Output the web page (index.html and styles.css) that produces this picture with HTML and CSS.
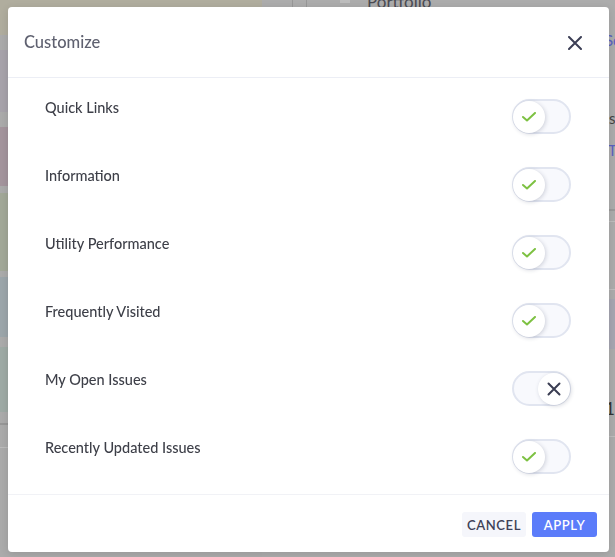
FILE: index.html
```html
<!DOCTYPE html>
<html lang="en">
<head>
    <meta charset="UTF-8">
    <meta name="viewport" content="width=device-width, initial-scale=1.0">
    <title>Customize</title>
    <link rel="stylesheet" href="styles.css">
</head>
<body>
    <!-- Page behind the overlay -->
    <div class="page">
        <aside class="sidebar">
            <div class="tile tile-olive"></div>
            <div class="tile tile-lilac"></div>
            <div class="tile tile-mauve"></div>
            <div class="tile tile-sage"></div>
            <div class="tile tile-steel"></div>
            <div class="tile tile-teal"></div>
            <div class="sidebar-rule"></div>
            <div class="sidebar-rule light"></div>
        </aside>
        <main class="content">
            <div class="topbar">
                <span class="topbar-tab"></span>
                <span class="topbar-box"></span>
                <span class="topbar-title">Portfolio</span>
            </div>
            <div class="panel">
                <p class="panel-link first">See all</p>
                <p class="panel-text">Issues summary</p>
                <p class="panel-link">Top</p>
                <div class="panel-rule"></div>
                <div class="panel-rule light"></div>
                <div class="panel-rule light second"></div>
                <div class="panel-band"></div>
                <p class="panel-num">12</p>
                <div class="panel-rule light third"></div>
            </div>
        </main>
    </div>

    <!-- Customize dialog -->
    <div class="modal">
        <div class="modal-header">
            <h2 class="modal-title">Customize</h2>
            <svg class="close" width="14" height="14" viewBox="0 0 14 14"><path d="M1 1 L13 13 M13 1 L1 13" stroke="#3b3e55" stroke-width="2" fill="none" stroke-linecap="round"/></svg>
        </div>

        <div class="modal-body">
            <div class="row">
                <span class="label">Quick Links</span>
                <span class="toggle"><span class="knob"><svg width="14" height="10" viewBox="0 0 14 10"><path d="M1 5 L5 8.5 L13 1" stroke="#7dc142" stroke-width="2" fill="none" stroke-linecap="round" stroke-linejoin="round"/></svg></span></span>
            </div>
            <div class="row">
                <span class="label">Information</span>
                <span class="toggle"><span class="knob"><svg width="14" height="10" viewBox="0 0 14 10"><path d="M1 5 L5 8.5 L13 1" stroke="#7dc142" stroke-width="2" fill="none" stroke-linecap="round" stroke-linejoin="round"/></svg></span></span>
            </div>
            <div class="row">
                <span class="label">Utility Performance</span>
                <span class="toggle"><span class="knob"><svg width="14" height="10" viewBox="0 0 14 10"><path d="M1 5 L5 8.5 L13 1" stroke="#7dc142" stroke-width="2" fill="none" stroke-linecap="round" stroke-linejoin="round"/></svg></span></span>
            </div>
            <div class="row">
                <span class="label">Frequently Visited</span>
                <span class="toggle"><span class="knob"><svg width="14" height="10" viewBox="0 0 14 10"><path d="M1 5 L5 8.5 L13 1" stroke="#7dc142" stroke-width="2" fill="none" stroke-linecap="round" stroke-linejoin="round"/></svg></span></span>
            </div>
            <div class="row">
                <span class="label">My Open Issues</span>
                <span class="toggle off"><span class="knob"><svg width="14" height="14" viewBox="0 0 14 14"><path d="M1.5 1.5 L12.5 12.5 M12.5 1.5 L1.5 12.5" stroke="#3a3d52" stroke-width="2" fill="none" stroke-linecap="round"/></svg></span></span>
            </div>
            <div class="row">
                <span class="label">Recently Updated Issues</span>
                <span class="toggle"><span class="knob"><svg width="14" height="10" viewBox="0 0 14 10"><path d="M1 5 L5 8.5 L13 1" stroke="#7dc142" stroke-width="2" fill="none" stroke-linecap="round" stroke-linejoin="round"/></svg></span></span>
            </div>
        </div>

        <div class="modal-footer">
            <button class="btn btn-cancel">CANCEL</button>
            <button class="btn btn-apply">APPLY</button>
        </div>
    </div>
</body>
</html>
```

FILE: styles.css
```css
/* Global Styles */
* {
    margin: 0;
    padding: 0;
    box-sizing: border-box;
}
body {
    font-family: Lato, "Liberation Sans", sans-serif;
    background: #adadad;
    width: 615px;
    height: 557px;
    overflow: hidden;
}

/* Background page (dimmed by the overlay) */
.page {
    position: fixed;
    top: 0;
    left: 0;
    right: 0;
    bottom: 0;
    display: flex;
}
.sidebar {
    width: 262px;
    flex: none;
    display: flex;
    flex-direction: column;
    background: #ababab;
}
.tile {
    flex: none;
}
.tile-olive {
    height: 35px;
    background: #b0ad9e;
    margin-bottom: 15px;
}
.tile-lilac {
    height: 62px;
    background: #a7a3ab;
    margin-bottom: 15px;
}
.tile-mauve {
    height: 59px;
    background: #a4959d;
    margin-bottom: 7px;
}
.tile-sage {
    height: 78px;
    background: #a2a898;
    margin-bottom: 6px;
}
.tile-steel {
    height: 60px;
    background: #9ca6ab;
    margin-bottom: 10px;
}
.tile-teal {
    height: 65px;
    background: #9eaaa5;
    margin-bottom: 11px;
}
.sidebar-rule {
    height: 2px;
    background: #979797;
    margin-bottom: 22px;
}
.sidebar-rule.light {
    height: 1px;
    background: #bcbcbc;
}
.content {
    flex: 1;
    min-width: 0;
    overflow: hidden;
    display: flex;
    flex-direction: column;
    background: #acacac;
}
.topbar {
    height: 8px;
    flex: none;
    display: flex;
    align-items: flex-end;
    overflow: hidden;
    padding-left: 30px;
}
.topbar-tab {
    width: 15px;
    height: 8px;
    flex: none;
    border-left: 1px solid #979797;
    border-right: 1px solid #979797;
}
.topbar-box {
    width: 10px;
    height: 3px;
    flex: none;
    margin: 0 0 5px 33px;
    background: #bdbdbd;
    align-self: flex-start;
}
.topbar-title {
    font-size: 17px;
    line-height: 12px;
    color: #4a4a52;
    margin-left: 17px;
}
.panel {
    padding-left: 343px;
    display: flex;
    flex-direction: column;
}
.panel-link,
.panel-text,
.panel-num {
    font-size: 15px;
    line-height: 18px;
    white-space: nowrap;
}
.panel-link {
    color: #5b62c0;
}
.panel-link.first {
    margin-top: 23px;
}
.panel-text {
    color: #444;
    margin-top: 60px;
}
.panel-text + .panel-link {
    margin-top: 14px;
    padding-left: 3px;
}
.panel-rule {
    height: 2px;
    background: #9a9a9a;
    margin-top: 50px;
}
.panel-rule.light {
    height: 1px;
    background: #bdbdbd;
    margin-top: 10px;
}
.panel-rule.second {
    margin-top: 67px;
}
.panel-band {
    height: 50px;
    background: #a6a6b1;
    margin-top: 9px;
}
.panel-num {
    color: #333;
    font-size: 17px;
    margin-top: 51px;
}
.panel-rule.third {
    margin-top: 18px;
}

/* Dialog */
.modal {
    position: relative;
    z-index: 1;
    margin: 7px 6px 0 8px;
    height: 545px;
    background: #fff;
    border-radius: 4px;
    box-shadow: 0 2px 8px rgba(0, 0, 0, 0.12);
    display: flex;
    flex-direction: column;
}
.modal-header {
    height: 71px;
    flex: none;
    display: flex;
    align-items: center;
    justify-content: space-between;
    padding: 0 27px 0 16px;
    border-bottom: 1px solid #eceef5;
}
.modal-title {
    font-size: 16.5px;
    font-weight: 500;
    color: #5f6170;
}
.close {
    display: block;
    margin-top: 1px;
}
.modal-body {
    padding: 20px 38px 20px 37px;
    display: flex;
    flex-direction: column;
    gap: 32px;
}
.row {
    display: flex;
    justify-content: space-between;
    align-items: flex-start;
    height: 36px;
}
.label {
    font-size: 14.5px;
    font-weight: 500;
    line-height: 20px;
    color: #3d3f48;
}

/* Toggle */
.toggle {
    width: 59px;
    height: 35px;
    margin-top: 1px;
    border: 2px solid #e1e5f0;
    border-radius: 18px;
    background: #f8f9fd;
    display: flex;
    align-items: center;
}
.toggle.off {
    justify-content: flex-end;
}
.knob {
    width: 32px;
    height: 32px;
    margin: 0 -1px;
    border-radius: 50%;
    background: #fff;
    box-shadow: 1px 1px 4px rgba(40, 50, 80, 0.2);
    display: flex;
    align-items: center;
    justify-content: center;
}

/* Footer */
.modal-footer {
    border-top: 1px solid #f1f2f6;
    padding: 17px 12px 15px;
    display: flex;
    justify-content: flex-end;
    gap: 6px;
}
.btn {
    height: 25px;
    border: none;
    border-radius: 3px;
    font-family: Lato, "Liberation Sans", sans-serif;
    font-size: 13px;
    font-weight: 600;
    letter-spacing: 0.6px;
}
.btn-cancel {
    width: 64px;
    background: #f5f6fb;
    color: #3e4157;
}
.btn-apply {
    width: 65px;
    background: #5b7cfa;
    color: #fff;
}
```
